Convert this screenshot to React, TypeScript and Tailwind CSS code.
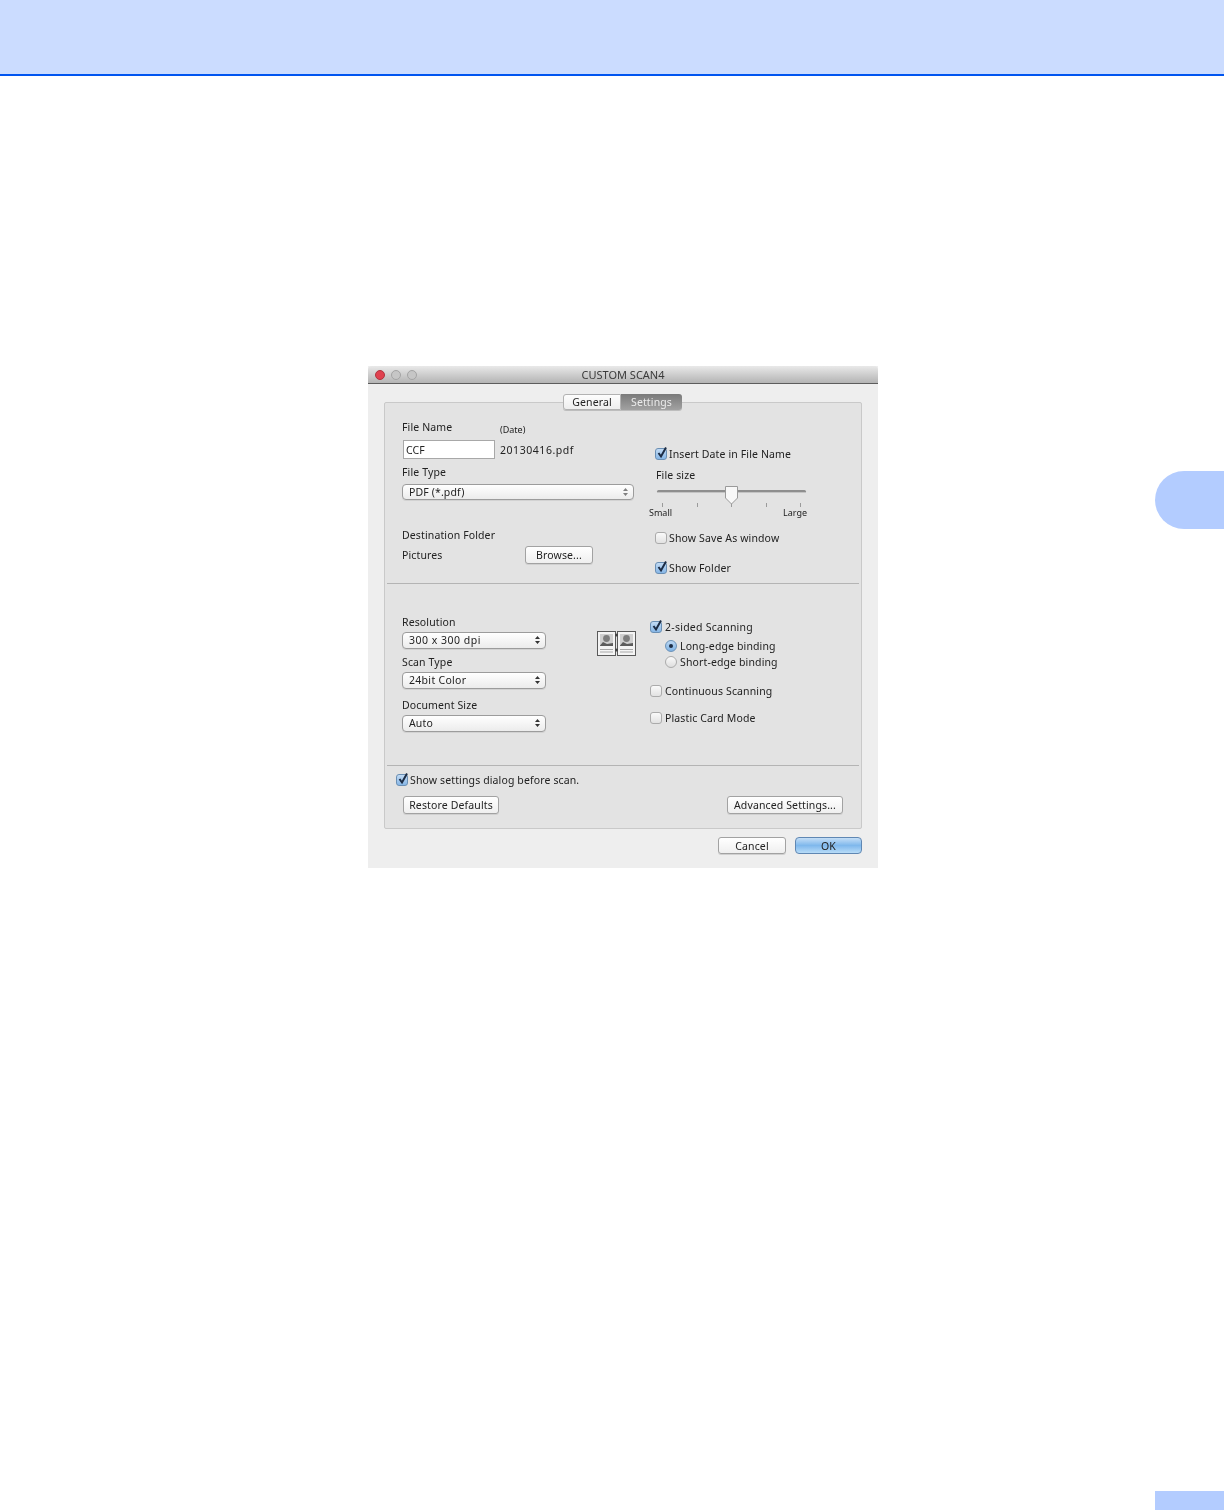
import React from "react";

const font = { fontFamily: '"Noto Sans", "Open Sans", sans-serif' };

function T({ children, className = "", tiny, light, title, track = "tracking-[0.13px]" }: { children: React.ReactNode; className?: string; tiny?: boolean; light?: boolean; title?: boolean; track?: string }) {
  const size = tiny ? "text-[9px]" : title ? "text-[11px]" : `text-[10.5px] ${track}`;
  const color = light ? "text-[#ececec]" : title ? "text-[#3a3a3a]" : "text-[#222222]";
  return <div className={`h-[14px] leading-[14px] whitespace-nowrap ${size} ${color} ${className}`}>{children}</div>;
}

function Check({ checked, label, className = "", wide, track }: { checked?: boolean; label: string; className?: string; wide?: boolean; track?: string }) {
  return (
    <div className={`flex items-center h-[14px] ${className}`}>
      <div className="relative w-[12px] h-[12px] shrink-0">
        {checked ? (
          <div className="w-[12px] h-[12px] rounded-[3px] border border-[#6a8fb4] bg-linear-to-b from-[#c2dbf4] to-[#86b6e6]" />
        ) : (
          <div className="w-[12px] h-[12px] rounded-[3px] border border-[#ababab] bg-linear-to-b from-[#fafafa] to-[#e2e2e2]" />
        )}
        {checked && (
          <svg className="absolute left-[1px] -top-[2px]" width="12" height="13" viewBox="0 0 12 13">
            <path d="M2.5 7 L5 10.5 L10 1.5" fill="none" stroke="#1c2c44" strokeWidth="2" />
          </svg>
        )}
      </div>
      <T track={track} className={wide ? "ml-[3px]" : "ml-[2px]"}>{label}</T>
    </div>
  );
}

function Radio({ on, label, className = "" }: { on?: boolean; label: string; className?: string }) {
  return (
    <div className={`flex items-center h-[14px] ${className}`}>
      {on ? (
        <div className="w-[12px] h-[12px] rounded-full border border-[#6b92b8] bg-linear-to-b from-[#bcd8f3] to-[#7db1e3] flex items-center justify-center">
          <div className="w-[4px] h-[4px] rounded-full bg-[#1c2c44]" />
        </div>
      ) : (
        <div className="w-[12px] h-[12px] rounded-full border border-[#ababab] bg-linear-to-b from-[#fafafa] to-[#dedede]" />
      )}
      <T className="ml-[3px]">{label}</T>
    </div>
  );
}

function Select({ label, className = "", small, track }: { label: string; className?: string; small?: boolean; track?: string }) {
  return (
    <div className={`flex items-center justify-between rounded-[4px] border border-[#9c9c9c] bg-linear-to-b from-[#ffffff] to-[#ececec] pl-[6px] pr-[4px] shadow-[0_1px_0_#d2d2d2] ${className}`}>
      <T track={track}>{label}</T>
      <svg width="7" height="10" viewBox="0 0 7 10" className={small ? "opacity-60" : ""}>
        <path d="M3.5 1 L6 4 H1 Z M3.5 9 L1 6 H6 Z" fill="#333" />
      </svg>
    </div>
  );
}

function Btn({ label, className = "" }: { label: string; className?: string }) {
  return (
    <div className={`flex items-center justify-center rounded-[3px] border border-[#a2a2a2] bg-linear-to-b from-[#ffffff] to-[#efefef] shadow-[0_1px_0_#d0d0d0] ${className}`}>
      <T>{label}</T>
    </div>
  );
}

function DuplexIcon() {
  const page = (x: number) => (
    <g key={x}>
      <rect x={x + 0.5} y="0.5" width="18" height="24" fill="#f4f4f4" stroke="#5a5a5a" />
      <rect x={x + 3} y="3" width="13" height="12" fill="#cfcfcf" />
      <circle cx={x + 9.5} cy="7.5" r="3.4" fill="#7d7d7d" />
      <path d={`M${x + 3} 14.5 L${x + 6} 11 L${x + 10} 13 L${x + 16} 12 V15 H${x + 3} Z`} fill="#5c5c5c" />
      <path d={`M${x + 3} 18.5 H${x + 16} M${x + 3} 21 H${x + 16}`} stroke="#a8a8a8" />
    </g>
  );
  return (
    <svg width="39" height="25" viewBox="0 0 39 25" className="shrink-0">
      {page(0)}
      {page(20)}
      <circle cx="19.5" cy="4" r="1.5" fill="#444" />
      <circle cx="19.5" cy="19" r="1.5" fill="#444" />
    </svg>
  );
}

function Slider() {
  return (
    <svg width="160" height="24" viewBox="0 0 160 24" className="block">
      <rect x="8" y="6" width="149" height="3" rx="1.5" fill="#8e8e8e" />
      <rect x="8" y="8" width="149" height="1" fill="#c4c4c4" />
      {[13, 48, 82, 117, 151].map((x) => (
        <path key={x} d={`M${x + 0.5} 19 V23`} stroke="#9a9a9a" />
      ))}
      <path d="M76.5 2.5 H88.5 V14 L82.5 20 L76.5 14 Z" fill="#f8f8f8" stroke="#9a9a9a" />
    </svg>
  );
}

export default function App() {
  return (
    <div className="relative min-h-[1510px] bg-white overflow-hidden" style={font}>
      <header className="h-[76px] bg-[#cbdcff] border-b-2 border-[#0055f0]" />

      <div className="absolute right-0 top-[471px] w-[69px] h-[58px] rounded-l-[29px] bg-[#b3ccff]" />
      <div className="absolute right-0 bottom-0 w-[69px] h-[19px] bg-[#b3ccff]" />

      <main className="pt-[290px] pl-[368px]">
        <div className="w-[510px] h-[502px] bg-[#eeeeee] blur-[0.35px]">
          <div className="relative h-[18px] flex items-center justify-center rounded-t-[4px] bg-linear-to-b from-[#e9e9e9] to-[#b4b4b4] border-b border-[#5c5c5c]">
            <div className="absolute left-[7px] top-[4px] flex gap-[6px]">
              <div className="w-[10px] h-[10px] rounded-full bg-[#e0414f] border border-[#b0343f]" />
              <div className="w-[10px] h-[10px] rounded-full bg-[#c6c6c6] border border-[#a4a4a4]" />
              <div className="w-[10px] h-[10px] rounded-full bg-[#c6c6c6] border border-[#a4a4a4]" />
            </div>
            <T title>CUSTOM SCAN4</T>
          </div>

          <div className="relative mt-[18px] mx-[16px] h-[427px] bg-[#e3e3e3] border border-[#c9c9c9] rounded-[2px]">
            <div className="absolute left-[178px] -top-[9px] flex h-[16px] rounded-[3px] shadow-[0_1px_0_#bdbdbd]">
              <div className="w-[58px] flex items-center justify-center rounded-l-[3px] border border-[#b2b2b2] bg-linear-to-b from-[#fdfdfd] to-[#eeeeee]">
                <T>General</T>
              </div>
              <div className="w-[61px] flex items-center justify-center rounded-r-[3px] bg-linear-to-b from-[#7a7a7a] to-[#a2a2a2]">
                <T light>Settings</T>
              </div>
            </div>

            <section className="mx-[2px] h-[181px] border-b border-[#b4b4b4] pl-[15px] grid grid-cols-[253px_1fr]">
              <div className="pt-[17px]">
                <div className="flex h-[14px]">
                  <T className="w-[98px]">File Name</T>
                  <T tiny className="mt-[3px]">(Date)</T>
                </div>
                <div className="flex items-center mt-[6px]">
                  <div className="ml-[1px] w-[92px] h-[19px] bg-white border border-[#a8a8a8] pl-[2px] flex items-center">
                    <T>CCF</T>
                  </div>
                  <T track="tracking-[0.55px]" className="ml-[5px]">20130416.pdf</T>
                </div>
                <T className="mt-[6px]">File Type</T>
                <Select label="PDF (*.pdf)" small className="mt-[5px] w-[232px] h-[16px]" />
                <T className="mt-[28px]">Destination Folder</T>
                <div className="mt-[4px] w-[191px] h-[18px] flex items-center justify-between">
                  <T>Pictures</T>
                  <Btn label="Browse..." className="w-[68px] h-[18px]" />
                </div>
              </div>
              <div className="pt-[44px]">
                <Check checked label="Insert Date in File Name" />
                <T className="mt-[7px] ml-[1px]">File size</T>
                <div className="-ml-[6px] mt-[2px] h-[22px]"><Slider /></div>
                <div className="-ml-[6px] w-[158px] flex justify-between">
                  <T tiny>Small</T>
                  <T tiny>Large</T>
                </div>
                <Check label="Show Save As window" className="mt-[11px]" />
                <Check checked label="Show Folder" className="mt-[16px]" />
              </div>
            </section>

            <section className="mx-[2px] h-[182px] border-b border-[#b4b4b4] pl-[15px] flex">
              <div className="pt-[31px] w-[144px]">
                <T>Resolution</T>
                <Select label="300 x 300 dpi" track="tracking-[0.5px]" className="mt-[3px] h-[17px] pb-[1px]" />
                <T className="mt-[6px]">Scan Type</T>
                <Select label="24bit Color" track="tracking-[0.3px]" className="mt-[3px] h-[17px] pb-[1px]" />
                <T className="mt-[9px]">Document Size</T>
                <Select label="Auto" className="mt-[3px] h-[17px] pb-[1px]" />
              </div>
              <div className="ml-[51px] mt-[47px] h-[25px]"><DuplexIcon /></div>
              <div className="ml-[14px] pt-[36px]">
                <Check checked wide track="tracking-[0.25px]" label="2-sided Scanning" />
                <Radio on label="Long-edge binding" className="ml-[15px] mt-[5px]" />
                <Radio label="Short-edge binding" className="ml-[15px] mt-[2px]" />
                <Check wide label="Continuous Scanning" className="mt-[15px]" />
                <Check wide label="Plastic Card Mode" className="mt-[13px]" />
              </div>
            </section>

            <section className="mx-[2px] pt-[7px]">
              <Check checked label="Show settings dialog before scan." className="ml-[9px]" />
              <div className="mt-[9px] pl-[16px] pr-[16px] flex justify-between">
                <Btn label="Restore Defaults" className="w-[96px] h-[18px]" />
                <Btn label="Advanced Settings..." className="w-[116px] h-[18px]" />
              </div>
            </section>
          </div>

          <div className="mt-[8px] pr-[16px] flex justify-end gap-[9px]">
            <Btn label="Cancel" className="w-[68px] h-[17px]" />
            <div className="w-[67px] h-[17px] flex items-center justify-center rounded-[4px] border border-[#5f87b3] bg-linear-to-b from-[#c4def6] via-[#7fb8ec] to-[#b8dcf8]">
              <T>OK</T>
            </div>
          </div>
        </div>
      </main>
    </div>
  );
}
